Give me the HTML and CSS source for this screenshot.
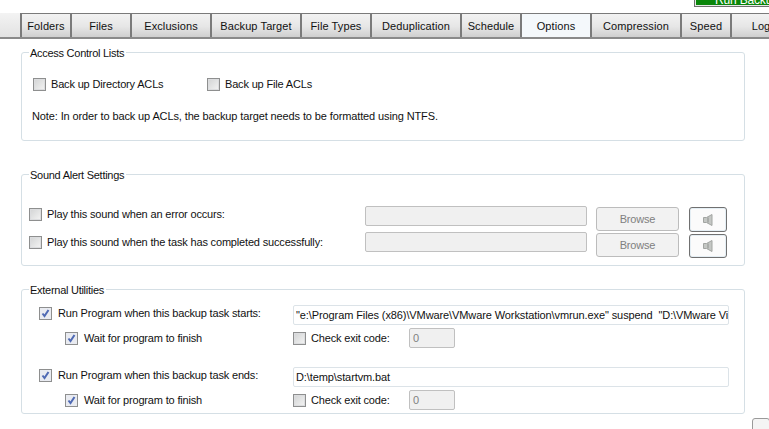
FILE: index.html
```html
<!DOCTYPE html>
<html lang="en">
<head>
<meta charset="utf-8">
<title>Backup task options</title>
<link rel="stylesheet" href="styles.css">
</head>
<body>
<div class="page">
  <div class="top"><div class="run"><span class="run-in">Run Backup</span></div></div>
  <nav class="tabs">
    <span class="tab w50">Folders</span>
    <span class="tab w60">Files</span>
    <span class="tab w80">Exclusions</span>
    <span class="tab w90">Backup Target</span>
    <span class="tab w70">File Types</span>
    <span class="tab w90">Deduplication</span>
    <span class="tab w60">Schedule</span>
    <span class="tab w70 active">Options</span>
    <span class="tab w90">Compression</span>
    <span class="tab w50">Speed</span>
    <span class="tab w60">Log</span>
  </nav>

  <section class="group g1">
    <h2 class="legend">Access Control Lists</h2>
    <div class="row acl">
      <label class="opt o1"><i class="cb"></i>Back up Directory ACLs</label>
      <label class="opt"><i class="cb"></i>Back up File ACLs</label>
    </div>
    <p class="note">Note: In order to back up ACLs, the backup target needs to be formatted using NTFS.</p>
  </section>

  <section class="group g2">
    <h2 class="legend">Sound Alert Settings</h2>
    <div class="row snd r1">
      <label class="opt slabel"><i class="cb"></i>Play this sound when an error occurs:</label>
      <span class="field dis sfield"></span>
      <span class="btn">Browse</span>
      <span class="spk"><svg width="10" height="12" viewBox="0 0 10 12"><path d="M.5 3.500h3L9 .5v11L3.500 8.500h-3z" fill="#c4c7c4" stroke="#a2a5a2"/><path d="M5 3.500v5" stroke="#8f928f"/></svg></span>
    </div>
    <div class="row snd r2">
      <label class="opt slabel"><i class="cb"></i>Play this sound when the task has completed successfully:</label>
      <span class="field dis sfield"></span>
      <span class="btn">Browse</span>
      <span class="spk"><svg width="10" height="12" viewBox="0 0 10 12"><path d="M.5 3.500h3L9 .5v11L3.500 8.500h-3z" fill="#c4c7c4" stroke="#a2a5a2"/><path d="M5 3.500v5" stroke="#8f928f"/></svg></span>
    </div>
  </section>

  <section class="group g3">
    <h2 class="legend">External Utilities</h2>
    <div class="row ext">
      <label class="opt xlabel"><i class="cb on"><svg width="11" height="11" viewBox="0 0 11 11"><path d="M2.500 5.500l2 2.500L8.500 2" fill="none" stroke="#4f6ab4" stroke-width="2"/></svg></i>Run Program when this backup task starts:</label>
      <span class="field path">"e:\Program Files (x86)\VMware\VMware Workstation\vmrun.exe" suspend &nbsp;"D:\VMware Virtual Machines\vm.vmx"</span>
    </div>
    <div class="row sub">
      <label class="opt wlabel"><i class="cb on"><svg width="11" height="11" viewBox="0 0 11 11"><path d="M2.500 5.500l2 2.500L8.500 2" fill="none" stroke="#4f6ab4" stroke-width="2"/></svg></i>Wait for program to finish</label>
      <label class="opt clabel"><i class="cb"></i>Check exit code:</label>
      <span class="field dis code">0</span>
    </div>
    <div class="row ext second">
      <label class="opt xlabel"><i class="cb on"><svg width="11" height="11" viewBox="0 0 11 11"><path d="M2.500 5.500l2 2.500L8.500 2" fill="none" stroke="#4f6ab4" stroke-width="2"/></svg></i>Run Program when this backup task ends:</label>
      <span class="field path">D:\temp\startvm.bat</span>
    </div>
    <div class="row sub">
      <label class="opt wlabel"><i class="cb on"><svg width="11" height="11" viewBox="0 0 11 11"><path d="M2.500 5.500l2 2.500L8.500 2" fill="none" stroke="#4f6ab4" stroke-width="2"/></svg></i>Wait for program to finish</label>
      <label class="opt clabel"><i class="cb"></i>Check exit code:</label>
      <span class="field dis code">0</span>
    </div>
  </section>

  <div class="corner"><span class="corner-btn"></span></div>
</div>
</body>
</html>
```
FILE: styles.css
```css
* { box-sizing: border-box; }
html, body { margin: 0; padding: 0; background: #fff; }
body { width: 769px; height: 429px; overflow: hidden; }
.page {
  width: 769px;
  height: 429px;
  overflow: hidden;
  font-family: "Liberation Sans", Arial, sans-serif;
  font-size: 11px;
  letter-spacing: -0.17px;
  color: #111;
}
.top { height: 13px; display: flex; justify-content: flex-start; padding-left: 694px; }
.run {
  flex: none;
  width: 100px;
  height: 7px;
  border: 1px solid #6d716d;
  border-top: 0;
  padding: 0 1px 1px;
  background: #e8e8e8;
  overflow: hidden;
}
.run-in {
  display: block;
  height: 5px;
  padding-left: 19px;
  background: #0a860a;
  color: #fff;
  font-size: 12px;
  line-height: 0;
  white-space: nowrap;
  overflow: hidden;
}
.tabs {
  display: flex;
  height: 26px;
  padding-left: 20px;
  border-bottom: 2px solid #8a8a8a;
  background: linear-gradient(#f3f3f3, #e2e2e2);
  overflow: hidden;
}
.tab {
  flex: none;
  height: 24px;
  border-left: 2px solid #7a7a7a;
  border-top: 1px solid #7a7a7a;
  background: linear-gradient(#f2f2f2 0, #e6e6e6 55%, #cfcfcf 100%);
  text-align: center;
  line-height: 25px;
  letter-spacing: 0.1px;
}
.tab.active { background: #f4f8fb; }
.w50 { width: 50px; }
.w60 { width: 60px; }
.w70 { width: 70px; }
.w80 { width: 80px; }
.w90 { width: 90px; }

.group {
  position: relative;
  width: 724px;
  margin-left: 21px;
  border: 1px solid #d5dfe5;
  border-radius: 3px;
}
.g1 { height: 89px; margin-top: 13px; }
.g2 { height: 92px; margin-top: 33px; }
.g3 { height: 125px; margin-top: 23px; }
.legend {
  position: absolute;
  left: 7px;
  top: -7px;
  margin: 0;
  padding: 0 2px 0 1px;
  background: #fff;
  font: inherit;
  letter-spacing: -0.27px;
  line-height: 14px;
}
.row { display: flex; align-items: center; }
.opt { display: flex; align-items: center; flex: none; white-space: nowrap; }
.cb {
  flex: none;
  display: flex;
  align-items: center;
  justify-content: center;
  width: 13px;
  height: 13px;
  margin-right: 5px;
  border: 1px solid #8e8f8f;
  background: linear-gradient(135deg, #d2d3d4, #f4f4f4);
  box-shadow: inset 0 0 0 1px #dcdddf;
}
.cb.on { margin-right: 6px; background: #e9ebf1; box-shadow: none; }

.acl { height: 16px; margin-top: 23px; padding-left: 11px; }
.o1 { width: 174px; }
.note { margin: 17px 0 0 10px; line-height: 14px; letter-spacing: -0.12px; }

.snd { height: 26px; padding-left: 7px; align-items: flex-start; }
.r1 { margin-top: 31px; }
.slabel { width: 336px; height: 16px; }
.r2 .slabel { margin-top: 2px; }
.sfield { width: 222px; height: 20px; }
.btn {
  flex: none;
  width: 83px;
  height: 24px;
  margin: 1px 0 0 9px;
  border: 1px solid #bcbcbc;
  border-radius: 3px;
  background: #f2f2f2;
  color: #808080;
  text-align: center;
  line-height: 22px;
}
.spk {
  flex: none;
  display: flex;
  align-items: center;
  justify-content: center;
  width: 38px;
  height: 25px;
  margin: 1px 0 0 10px;
  border: 1px solid #707070;
  border-radius: 3px;
  background: #fbfbfb;
  box-shadow: inset 0 0 0 1px #e4eef4;
}
.r2 .spk { margin-top: 2px; height: 24px; }

.field {
  flex: none;
  display: block;
  border: 1px solid #dce3e8;
  border-radius: 2px;
  background: #fff;
  overflow: hidden;
  white-space: nowrap;
  padding-left: 2px;
  line-height: 18px;
}
.dis { background: #f0f0f0; border-color: #c0c0c0; }
.ext { height: 20px; padding-left: 17px; margin-top: 15px; }
.xlabel { width: 254px; margin-top: -4px; }
.path { width: 436px; height: 20px; letter-spacing: -0.1px; }
.second { margin-top: 19px; }
.sub { height: 20px; margin-top: 3px; padding-left: 43px; }
.wlabel { width: 228px; }
.clabel { width: 116px; }
.code { width: 46px; height: 20px; color: #808080; padding-left: 3px; }

.corner { display: flex; justify-content: flex-end; margin-top: 4px; }
.corner-btn {
  width: 18px;
  height: 14px;
  margin-right: -1px;
  border: 1px solid #9a9a9a;
  border-radius: 3px;
  background: #f4f4f4;
}
```
